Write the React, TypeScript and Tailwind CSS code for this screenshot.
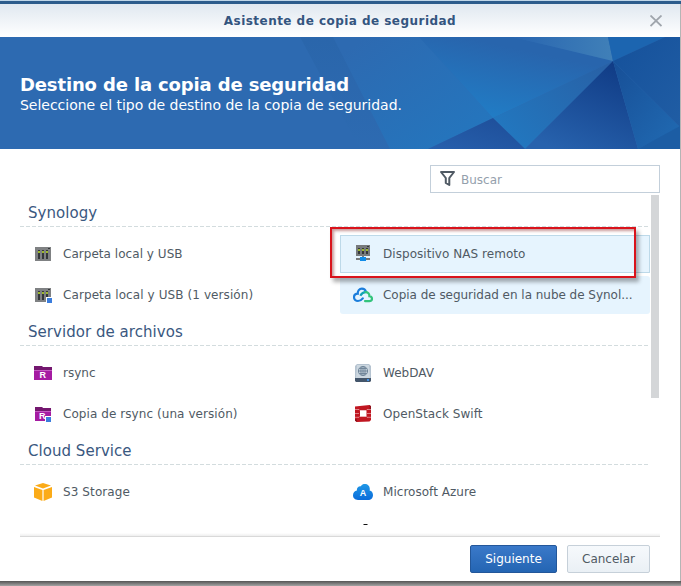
import type { ReactNode } from 'react';

function NasBody() {
  return (
    <>
      <path fill="#7f8183" d="M0 0h16v14H0z" />
      <path fill="#34373a" d="M3 3h2v9H3zM7 3h2v9H7zM11 3h2v9h-2zM13 1h2v1h-2z" />
      <path fill="#9cb82c" d="M3 4h2v2H3zM7 4h2v2H7zM11 4h2v2h-2z" />
    </>
  );
}

function VersionMark() {
  return (
    <>
      <path fill="#fff" d="M11 9h7v7h-7z" />
      <path fill="#3b7ddd" d="M12 10h5v5h-5z" />
    </>
  );
}

function NasIcon({ version = false }: { version?: boolean }) {
  return (
    <svg width="20" height="20" viewBox="-2 -3 20 20">
      <NasBody />
      {version && <VersionMark />}
    </svg>
  );
}

function RemoteIcon() {
  return (
    <svg width="20" height="20" viewBox="-2 -1 20 20">
      <path fill="#777a7c" d="M1 0h14v11H1z" />
      <path fill="#34373a" d="M3 3h2v6H3zM7 3h2v6H7zM11 3h2v6h-2zM12 1h2v1h-2z" />
      <path fill="#9cb82c" d="M3 4h2v2H3zM7 4h2v2H7zM11 4h2v2h-2z" />
      <path fill="#777a7c" d="M1 13h14v2H1zM7 11h2v2H7z" />
      <path fill="#0f8be8" d="M5 12h6v4H5z" />
    </svg>
  );
}

function C2Icon() {
  return (
    <svg width="20" height="16" viewBox="0 0 20 16" fill="none" strokeWidth="2.2">
      <path stroke="#1b7ddb" strokeLinecap="round" d="M9.8 11.4C8.5 13 7 14 5 14 2.7 14 1 12.400 1 10.300S2.600 6.800 4.800 6.700C4.500 3.900 6.300 1.600 8.900 1.600c2 0 3.500 1.200 4 3" />
      <path stroke="#12a3b5" d="M7.300 8.700C8.700 6.400 10.400 5.200 12.600 5.200" />
      <path stroke="#34c47c" strokeLinecap="round" d="M12.600 5.200c2.400 0 3.900 1.600 3.800 4 1.600.2 2.600 1.200 2.600 2.600 0 1.400-1 2.300-2.700 2.300H12" />
    </svg>
  );
}

function RsyncIcon({ version = false }: { version?: boolean }) {
  return (
    <svg width="20" height="20" viewBox="-1 -3 20 20">
      <g transform={version ? 'translate(1 0) scale(.89 1)' : undefined}>
        <path fill="#74176f" d="M0 0h8l1 1h9v4H0z" />
        <path fill="#a51ba2" d="M0 4h18v10H0z" />
        <path fill="#c65bc4" d="M0 4h18v1H0z" />
      </g>
      <text x={version ? 5 : 5.600} y="12.300" fontSize="9" fontWeight="700" fontFamily="Liberation Sans, sans-serif" fill="#fff">R</text>
      {version && <VersionMark />}
    </svg>
  );
}

function WebDavIcon() {
  return (
    <svg width="20" height="20" viewBox="-2 -1 20 20">
      <path fill="#b5c3d0" d="M2 0h12l2 2v13H0V2z" />
      <path fill="#ccd7e0" d="M2 1h12l1 13H1z" />
      <path fill="#44566b" d="M0 14h16v3l-1 1H1l-1-1z" />
      <path fill="#4592e4" d="M12 15h2v2h-2z" />
      <g fill="none" stroke="#71869a" strokeWidth="1">
        <circle cx="8" cy="7" r="4.600" />
        <ellipse cx="8" cy="7" rx="2.100" ry="4.600" />
        <path d="M3.500 7h9M4.300 4.500h7.400M4.300 9.500h7.400M8 2.500v9" />
      </g>
    </svg>
  );
}

function SwiftIcon() {
  return (
    <svg width="20" height="20" viewBox="-2 -1 20 20">
      <path fill="#c01621" d="M0 1.500 14.500 0 16 1.200V15l-1.500 1.500L2 17 0 15.800z" />
      <path fill="#8d101a" d="M14.500 0 16 1.200V5l-1.500-.5zM0 14l2 .5V17l-2-1.200z" />
      <path fill="none" stroke="#f3c6c9" strokeWidth=".6" d="M0 4.500h4l1 1h6l1-1h4M0 12.300h4l1-1h6l1 1h4M0 8.500h4M12 8.500h4" />
      <path fill="#fff" d="M5 5.500h6.500v6H5z" />
    </svg>
  );
}

function S3Icon() {
  return (
    <svg width="20" height="20" viewBox="-1 -1 20 20" fill="#fbab18">
      <path d="M9 0l8 2.600-8 2.900-8-2.900zM0 4l8.400 3v11L0 14.500zM18 4 9.600 7v11l8.400-3.500z" />
    </svg>
  );
}

function AzureIcon() {
  return (
    <svg width="20" height="18" viewBox="0 0 20 18">
      <defs>
        <linearGradient id="azure" x1="0" y1="0" x2="0" y2="1">
          <stop offset="0" stopColor="#2098e6" />
          <stop offset="1" stopColor="#0b6cda" />
        </linearGradient>
      </defs>
      <path fill="url(#azure)" d="M5 17c-3 0-5-2-5-4.700C0 9.800 1.700 8 3.900 7.600 3.500 4.800 5.400 3 7.800 3.200 8.800 1.600 10.200 1 11.800 1c2.900 0 5 2 5 5 0 .6 0 1-.2 1.500C18.700 7.900 20 9.800 20 12c0 3-2 5-5 5z" />
      <text x="10" y="13.200" textAnchor="middle" fontSize="9" fontWeight="700" fontFamily="Liberation Sans, sans-serif" fill="#fff">A</text>
    </svg>
  );
}

function NextIcon() {
  return (
    <svg width="20" height="20" viewBox="0 0 20 20">
      <path fill="#111" d="M10.500 1h4v1h-4zM3 4h14v14H3z" />
    </svg>
  );
}

function Item({ icon, label, fit = '', state = 'border-transparent' }: { icon: ReactNode; label: string; fit?: string; state?: string }) {
  return (
    <div className={`flex h-[38px] items-center border pl-[12px] ${state}`}>
      <span className="flex w-5 shrink-0 justify-center">{icon}</span>
      <span className={`ml-[10px] whitespace-nowrap text-[12px] leading-4 ${fit}`}>{label}</span>
    </div>
  );
}

function Section({ title, children }: { title: string; children: ReactNode }) {
  return (
    <section className="h-[119px] shrink-0">
      <h2 className="h-[31px] pl-2 pt-[7px] text-[15px] leading-[23px] tracking-[0.04px] text-[#3a587f]">{title}</h2>
      <svg className="block" width="630" height="1">
        <path d="M0 .5h630" stroke="#d3dcde" strokeDasharray="4 2" />
      </svg>
      <div className="grid grid-cols-[320px_310px] gap-y-[3px] pt-2">{children}</div>
    </section>
  );
}

function BannerArt() {
  return (
    <svg className="absolute right-0 top-0" width="400" height="112" viewBox="280 37 400 112">
      <defs>
        <linearGradient id="g1" x1="0" y1="0" x2="1" y2="1"><stop offset=".1" stopColor="#2d6ab1" /><stop offset="1" stopColor="#2377bf" /></linearGradient>
        <linearGradient id="g2" gradientUnits="userSpaceOnUse" x1="520" y1="37" x2="495" y2="155"><stop offset=".1" stopColor="#2865ad" /><stop offset=".85" stopColor="#1f82cb" /></linearGradient>
        <linearGradient id="g3" gradientUnits="userSpaceOnUse" x1="600" y1="60" x2="515" y2="145"><stop stopColor="#2861a6" /><stop offset="1" stopColor="#2277bf" /></linearGradient>
        <linearGradient id="g4" gradientUnits="userSpaceOnUse" x1="610" y1="60" x2="570" y2="155"><stop stopColor="#103b85" /><stop offset="1" stopColor="#2762ad" /></linearGradient>
        <linearGradient id="g5" x1="0" y1="0" x2="1" y2="1"><stop stopColor="#174f97" /><stop offset="1" stopColor="#216bb3" /></linearGradient>
        <linearGradient id="g6" x1="0" y1="0" x2="1" y2="1"><stop stopColor="#15519b" /><stop offset="1" stopColor="#205da4" /></linearGradient>
        <linearGradient id="g7" x1="0" y1="0" x2="1" y2="0"><stop stopColor="#2865b0" /><stop offset="1" stopColor="#4080b8" /></linearGradient>
        <linearGradient id="g8" x1="0" y1="1" x2="1" y2="0"><stop stopColor="#2760ad" /><stop offset="1" stopColor="#1d4d98" /></linearGradient>
        <linearGradient id="g9" x1="0" y1="0" x2="0" y2="1"><stop stopColor="#2863a7" /><stop offset="1" stopColor="#2d6bb2" /></linearGradient>
      </defs>
      <path fill="url(#g9)" d="M300 37h35l55 112h-30z" opacity=".6" />
      <path fill="url(#g1)" d="M333 37h86l74 81-65 31h-38z" />
      <path fill="url(#g2)" d="M419 37h94l100 24-120 57z" />
      <path fill="url(#g7)" d="M513 37h95l5 24z" />
      <path fill="#1c65b0" d="M608 37h57l-52 24z" />
      <path fill="url(#g3)" d="m613 61-120 57 32 31z" />
      <path fill="url(#g8)" d="m493 118-65 31h97z" />
      <path fill="url(#g4)" d="m613 61-88 88h113z" />
      <path fill="url(#g5)" d="m613 61 25 88 42-22z" />
      <path fill="url(#g6)" d="m613 61 52-24h15v90z" />
      <path fill="#1c5da4" d="m638 149 42-23v23z" />
    </svg>
  );
}

export default function App() {
  return (
    <div className="flex h-[586px] w-[681px] flex-col overflow-hidden bg-white font-['DejaVu_Sans',Verdana,sans-serif] text-[#505a64]">
      <div className="h-px shrink-0 bg-[#bfd6e8]" />
      <div className="h-[3px] shrink-0 bg-[#2c5c8c]" />
      <div className="flex h-[577px] shrink-0 flex-col border-r border-[#b5b5b5]">
        <header className="flex h-[33px] shrink-0 items-center bg-linear-to-b from-[#e0e8f0] to-white">
          <h1 className="flex-1 pl-[30px] text-center text-[12px] font-bold tracking-[0.46px] text-[#34557f]">Asistente de copia de seguridad</h1>
          <svg className="mr-[18px]" width="12" height="12" viewBox="0 0 12 12">
            <path d="m.5.500 11 10.500M11.500.500.500 11" stroke="#9fa5ac" strokeWidth="1.800" />
          </svg>
        </header>
        <div className="relative flex h-[112px] shrink-0 flex-col bg-[#2d6ab1] pl-5 pt-[37px] text-white">
          <BannerArt />
          <h2 className="relative text-[18px] font-bold leading-[21px] tracking-[-0.14px]">Destino de la copia de seguridad</h2>
          <p className="relative text-[14px] leading-5 tracking-[-0.02px]">Seleccione el tipo de destino de la copia de seguridad.</p>
        </div>
        <div className="flex h-[46px] shrink-0 justify-end pr-5 pt-4">
          <label className="flex h-7 w-[230px] items-center border border-[#c3cfda] pl-[8px] text-[12px] text-[#94a0ac]">
            <svg width="18" height="18" viewBox="0 0 18 18">
              <path d="M2 2h13L10.300 8v7l-3.500-2V8z" fill="none" stroke="#505a64" strokeWidth="2" strokeLinejoin="round" />
            </svg>
            <span className="ml-[4px] pt-px">Buscar</span>
          </label>
        </div>
        <div className="relative flex h-[330px] shrink-0 pl-5">
          <main className="flex w-[630px] flex-col overflow-hidden">
            <Section title="Synology">
              <Item icon={<NasIcon />} label="Carpeta local y USB" fit="tracking-[0.04px]" />
              <Item icon={<RemoteIcon />} label="Dispositivo NAS remoto" fit="tracking-[0.05px]" state="border-[#bdd9e9] bg-[#e6f4fe]" />
              <Item icon={<NasIcon version />} label="Carpeta local y USB (1 versión)" fit="tracking-[0.09px]" />
              <Item icon={<C2Icon />} label="Copia de seguridad en la nube de Synol..." fit="tracking-[-0.03px]" state="rounded-[3px] border-transparent bg-[#e6f4fe]" />
            </Section>
            <Section title="Servidor de archivos">
              <Item icon={<RsyncIcon />} label="rsync" />
              <Item icon={<WebDavIcon />} label="WebDAV" />
              <Item icon={<RsyncIcon version />} label="Copia de rsync (una versión)" fit="tracking-[0.07px]" />
              <Item icon={<SwiftIcon />} label="OpenStack Swift" fit="tracking-[0.07px]" />
            </Section>
            <Section title="Cloud Service">
              <Item icon={<S3Icon />} label="S3 Storage" fit="tracking-[0.1px]" />
              <Item icon={<AzureIcon />} label="Microsoft Azure" fit="tracking-[0.03px]" />
              <span />
              <Item icon={<NextIcon />} label="" />
            </Section>
          </main>
          <div className="ml-px h-[203px] w-2 bg-[#d4d6d8]" />
          <div className="absolute left-[330px] top-[32px] h-[51px] w-[306px] border-2 border-[#d9131b] shadow-[3px_4px_4px_rgba(0,0,0,0.32),inset_2px_2px_3px_rgba(120,0,0,0.4)]" />
        </div>
        <footer className="mx-5 mt-[8px] flex h-[48px] shrink-0 flex-col">
          <div className="h-[4px] shrink-0 border-b border-[#d9d9d9] bg-linear-to-b from-white to-[#eeeeee]" />
          <div className="flex justify-end gap-[10px] pr-[10px] pt-[8px] text-[12px]">
            <button className="h-7 w-[87px] rounded-[2px] border border-[#23579a] bg-linear-to-b from-[#3a79c9] to-[#2465b3] text-white">Siguiente</button>
            <button className="h-7 w-[83px] rounded-[2px] border border-[#c6d0d9] bg-linear-to-b from-[#f6f9fc] to-[#eaf0f5]">Cancelar</button>
          </div>
        </footer>
      </div>
      <div className="h-[5px] shrink-0 bg-linear-to-b from-[#555555] to-[#a4a4a4]" />
    </div>
  );
}
